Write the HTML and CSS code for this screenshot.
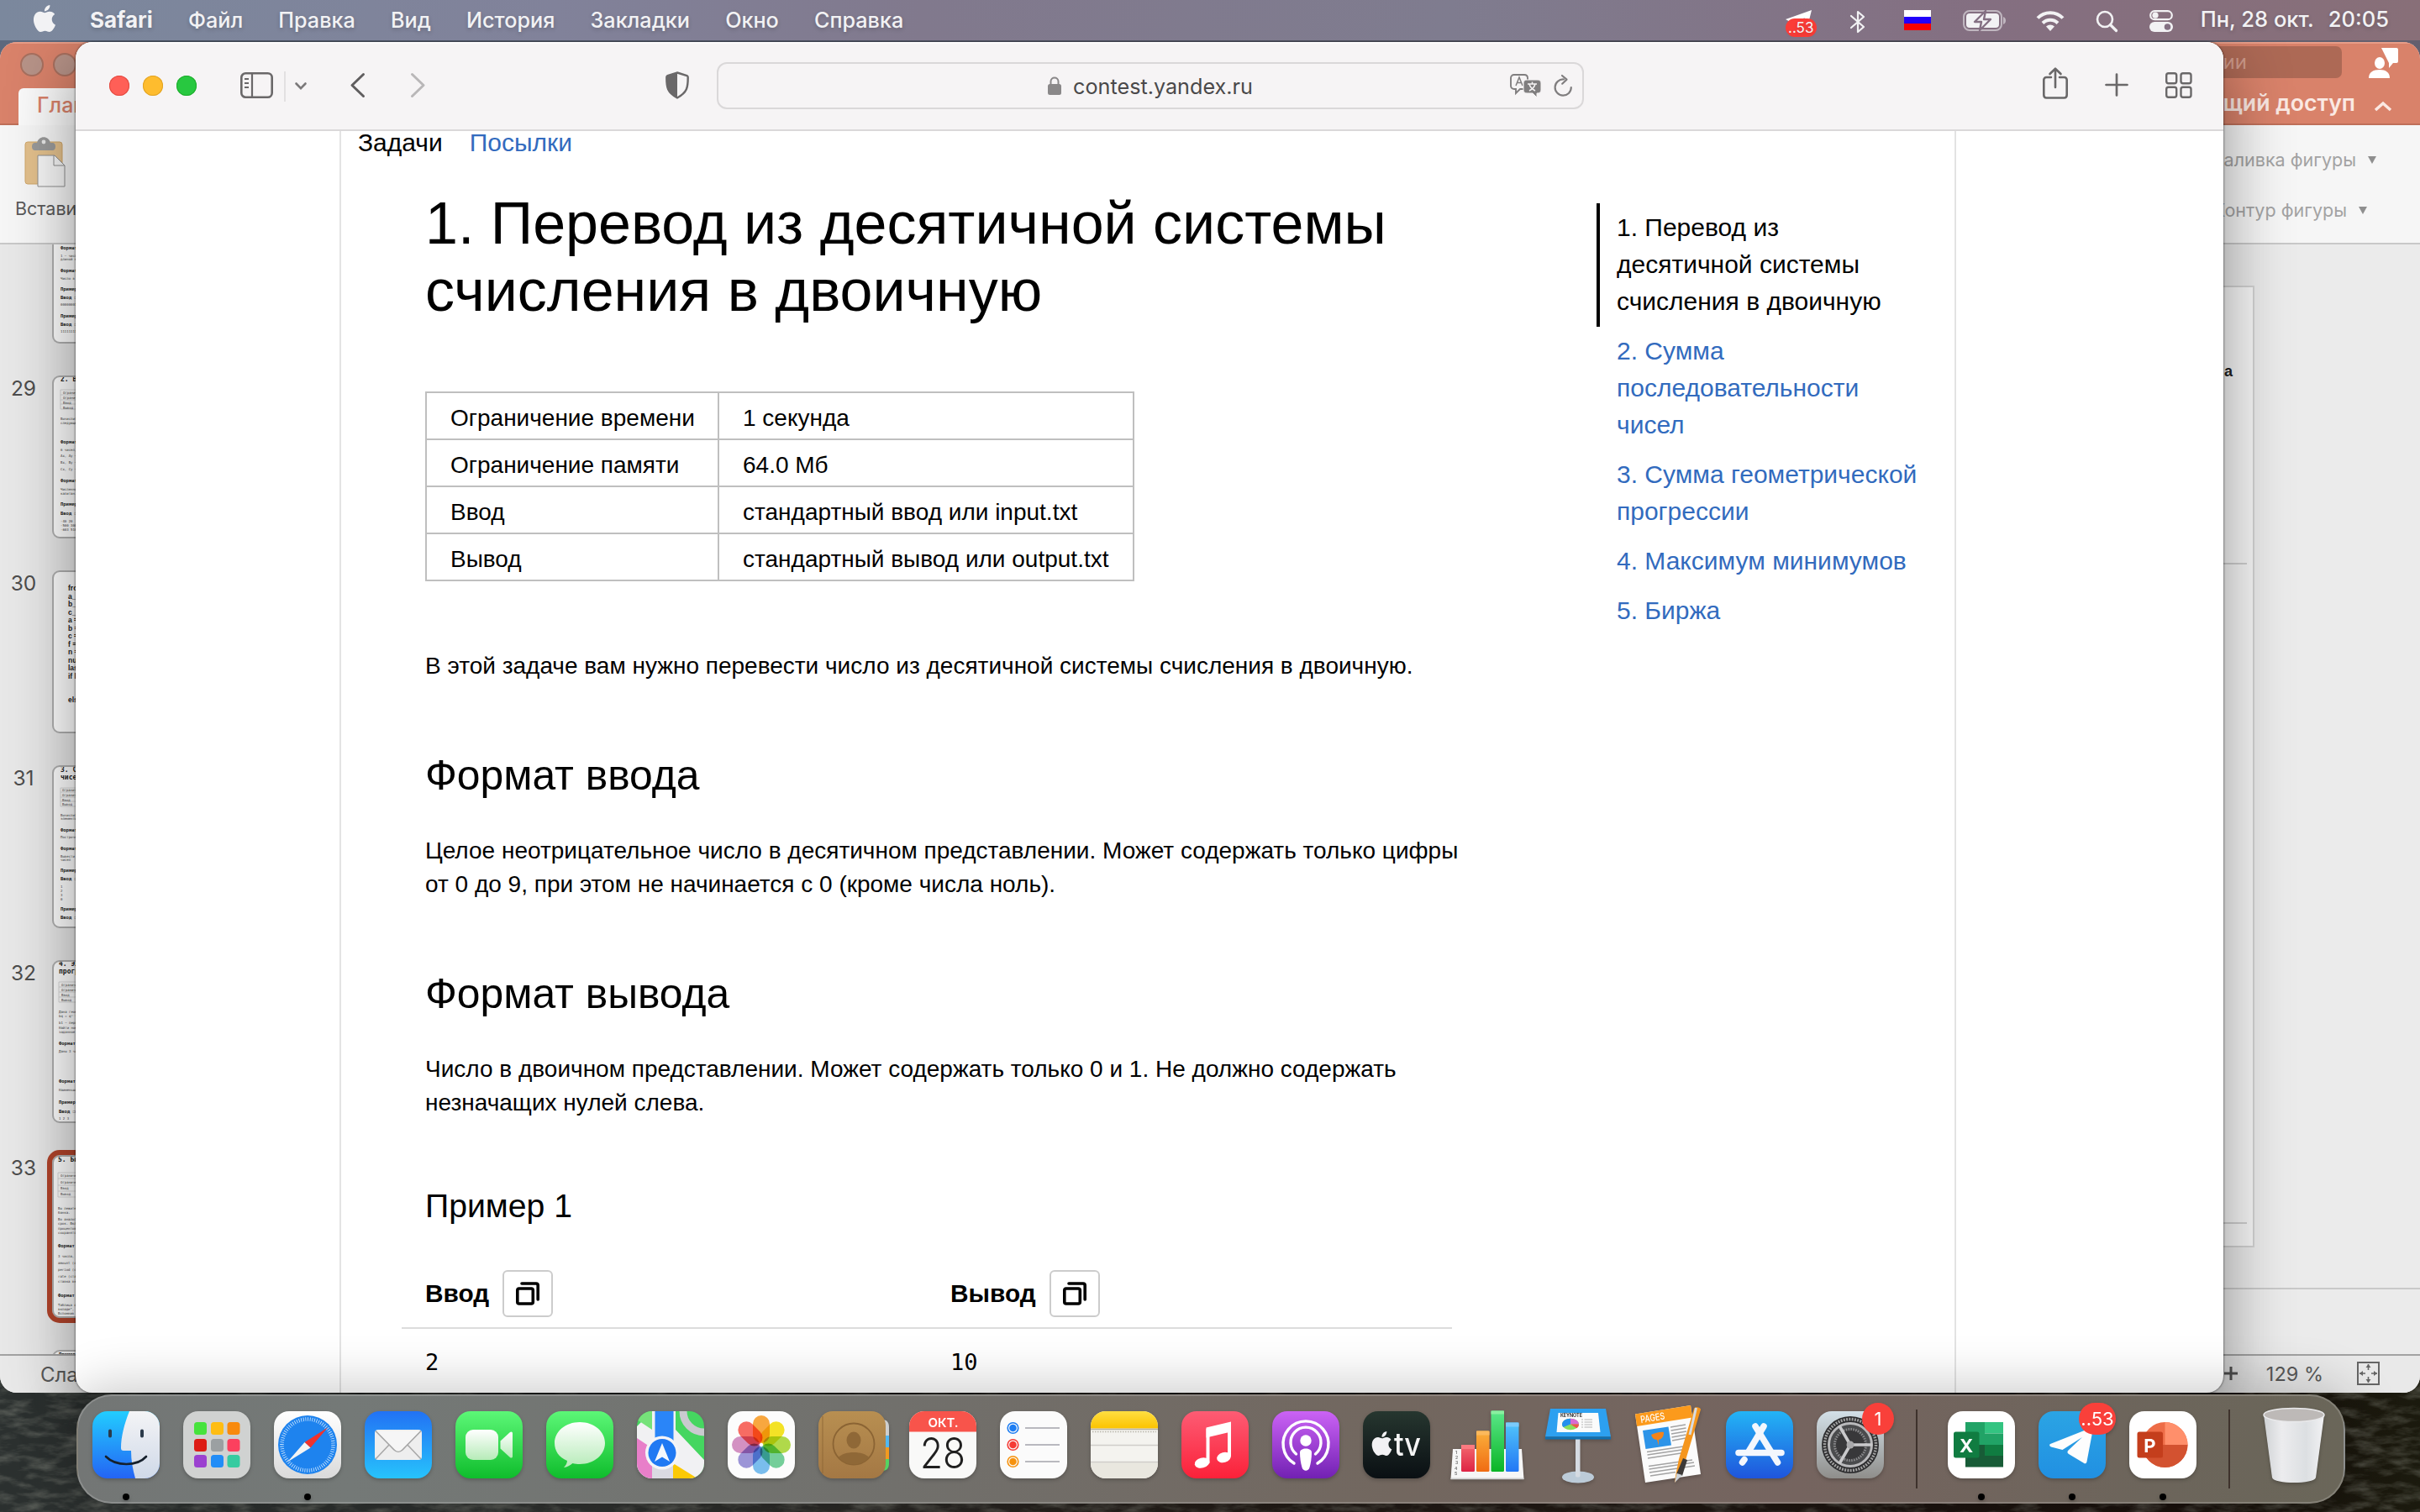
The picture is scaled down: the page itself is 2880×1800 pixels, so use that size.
FILE: index.html
```html
<!DOCTYPE html>
<html lang="ru">
<head>
<meta charset="utf-8">
<title>contest.yandex.ru</title>
<link rel="stylesheet" href="styles.css">
</head>
<body>
<div class="desktop">
  <svg class="wallpaper" width="2880" height="200" viewBox="0 0 2880 200">
    <defs>
      <linearGradient id="wall"><stop offset="0" stop-color="#2b302f"/><stop offset=".25" stop-color="#2f312f"/><stop offset=".5" stop-color="#241d18"/><stop offset=".9" stop-color="#1a110c"/><stop offset="1" stop-color="#1b1a0e"/></linearGradient>
      <filter id="rock" x="0" y="0" width="100%" height="100%"><feTurbulence type="fractalNoise" baseFrequency=".03 .09" numOctaves="4" seed="7"/><feColorMatrix values="0 0 0 0 .33  0 0 0 0 .34  0 0 0 0 .29  1.8 0 0 0 -.75"/></filter>
    </defs>
    <rect width="2880" height="200" fill="url(#wall)"/>
    <rect width="2880" height="200" filter="url(#rock)" opacity=".5"/>
  </svg>

  <header class="menubar">
    <nav class="menus">
      <svg class="apple" width="32" height="32" viewBox="0 0 24 24"><path id="apple-mark" fill="#f2f2f4" d="M12.152 6.896c-.948 0-2.415-1.078-3.96-1.04-2.04.027-3.91 1.183-4.961 3.014-2.117 3.675-.546 9.103 1.519 12.09 1.013 1.454 2.208 3.09 3.792 3.039 1.52-.065 2.09-.987 3.935-.987 1.831 0 2.35.987 3.96.948 1.637-.026 2.676-1.48 3.676-2.948 1.156-1.688 1.636-3.325 1.662-3.415-.039-.013-3.182-1.221-3.22-4.857-.026-3.04 2.48-4.494 2.597-4.559-1.429-2.09-3.623-2.324-4.39-2.376-2-.156-3.675 1.09-4.61 1.09zM15.53 3.83c.843-1.012 1.4-2.427 1.245-3.83-1.207.052-2.662.805-3.532 1.818-.78.896-1.454 2.338-1.273 3.714 1.338.104 2.715-.688 3.559-1.701"/></svg>
      <b>Safari</b><span>Файл</span><span>Правка</span><span>Вид</span><span>История</span><span>Закладки</span><span>Окно</span><span>Справка</span>
    </nav>
    <div class="status">
      <div class="tg"><svg width="32" height="24" viewBox="0 0 32 24"><path d="M0 11 31 0 25 24 14 20 23 9 9 16z" fill="#fff"/></svg><i>..53</i></div>
      <svg class="bt" width="18" height="28" viewBox="0 0 18 28"><path d="M1 7 16 20 9 26V2l7 6L1 21" fill="none" stroke="#f2f2f4" stroke-width="2.2" stroke-linejoin="round" stroke-linecap="round"/></svg>
      <svg class="flag" width="32" height="24" viewBox="0 0 32 24"><path fill="#fff" d="M0 0h32v8H0z"/><path fill="#2200fb" d="M0 8h32v8H0z"/><path fill="#f80000" d="M0 16h32v8H0z"/></svg>
      <svg class="battery" width="52" height="25" viewBox="0 0 52 25"><rect x="1" y="1" width="45" height="23" rx="7" fill="none" stroke="#f2f2f4" stroke-opacity=".55" stroke-width="2"/><path d="M48 8c4 1 4 8 0 9z" fill="#f2f2f4" opacity=".55"/><rect x="4" y="4" width="39" height="17" rx="4" fill="#f2f2f4"/><path d="M27 1 14 14h8l-2 10 13-13h-8z" fill="#f2f2f4" stroke="#847083" stroke-width="2.4" stroke-linejoin="round"/></svg>
      <svg class="wifi" width="34" height="25" viewBox="0 0 34 25"><g fill="none" stroke="#f2f2f4" stroke-width="4"><path d="M2 9.500C10 1 24 1 32 9.500"/><path d="M8 15.500c5-5 13-5 18 0"/></g><path d="M17 25l-5-5.500c3-2.700 7-2.700 10 0z" fill="#f2f2f4"/></svg>
      <svg class="find" width="27" height="26" viewBox="0 0 27 26"><circle cx="11" cy="11" r="9" fill="none" stroke="#f2f2f4" stroke-width="2.600"/><path d="M17.500 17.500 24.500 24.500" stroke="#f2f2f4" stroke-width="3.200" stroke-linecap="round"/></svg>
      <svg class="control" width="28" height="26" viewBox="0 0 28 26"><rect x="1.200" y="1.200" width="25.600" height="10" rx="5" fill="none" stroke="#f2f2f4" stroke-width="2.200"/><circle cx="7" cy="6.200" r="3.600" fill="#f2f2f4"/><rect y="14" width="28" height="12" rx="6" fill="#f2f2f4"/><circle cx="21.500" cy="20" r="3.800" fill="#847083"/></svg>
      <time><span>Пн, 28 окт.</span><span>20:05</span></time>
    </div>
  </header>

  <section class="ppt">
    <div class="ppt-title">
      <div class="ppt-row">
        <i class="off"></i><i class="off"></i>
        <div class="ppt-search">Поиск в презентации</div>
        <svg width="36" height="38" viewBox="0 0 36 38"><path d="M15 0h18a2 2 0 0 1 2 2v14a2 2 0 0 1-2 2h-4l-5 6v-6z" fill="#fff"/><ellipse cx="13" cy="18" rx="7" ry="8" fill="#fff" stroke="#d9826a" stroke-width="2"/><path d="M0 36c0-7 5-10 13-10 7 0 12 3 12 10z" fill="#fff"/></svg>
      </div>
      <div class="ppt-tabs">
        <span class="tab">Главная</span>
        <span class="share">Общий доступ</span>
        <svg width="22" height="12" viewBox="0 0 22 12"><path d="M2 10 11 2l9 8" fill="none" stroke="#fbe9e3" stroke-width="3.500"/></svg>
      </div>
    </div>
    <div class="ribbon">
      <div class="paste">
        <svg width="50" height="60" viewBox="0 0 50 60"><rect x="0" y="6" width="44" height="50" rx="3" fill="#e3c08c" stroke="#cfa669"/><path d="M11 16c-4 0-4-9 0-9h3c2-9 14-9 16 0h3c4 0 4 9 0 9z" fill="#9a9a9a"/><circle cx="22" cy="6" r="2.400" fill="#e8e8e8"/><path d="M15 22h20l12 12v25H15z" fill="#f6f6f6" stroke="#8e8e8e"/><path d="M34 22v12h13" fill="none" stroke="#8e8e8e"/></svg>
        <span>Вставить</span>
      </div>
      <div class="shape-tools">
        <p>Заливка фигуры <svg width="10" height="9" viewBox="0 0 10 9"><path d="M0 0h10L5 9z" fill="#8f8f8f"/></svg></p>
        <p class="outline">Контур фигуры <svg width="10" height="9" viewBox="0 0 10 9"><path d="M0 0h10L5 9z" fill="#8f8f8f"/></svg></p>
      </div>
    </div>
    <div class="ppt-body">
      <div class="slides">
        <div class="slide cut"><b></b><svg width="300" height="118"><g class="h"><text x="8" y="6">Формат ввода</text><text x="8" y="33">Формат вывода</text><text x="8" y="55">Пример 1</text><text x="8" y="65">Ввод ❐</text><text x="8" y="87">Пример 2</text><text x="8" y="97">Ввод ❐</text></g><g class="t"><text x="8" y="15">1 — число в</text><text x="8" y="19">длиной не п</text><text x="8" y="42">Число в 10</text><text x="8" y="73">00000001</text><text x="8" y="105">11111111</text></g></svg></div>
        <div class="slide"><b>29</b><svg width="300" height="190"><text class="big" x="8" y="5">2. Вычисление</text><path class="grid" d="M8 15h90v23H8zM8 21h90M8 27h90M8 32h90"/><g class="h"><text x="8" y="79">Формат ввода</text><text x="8" y="125">Формат вывода</text><text x="8" y="153">Пример 1</text><text x="8" y="164">Ввод ❐</text></g><g class="t"><text x="11" y="20">Ограничение</text><text x="11" y="26">Ограничение</text><text x="11" y="32">Ввод</text><text x="11" y="38">Вывод</text><text x="8" y="51">Вычислить п</text><text x="8" y="56">следующего</text><text x="8" y="88">6 чисел, ка</text><text x="8" y="95">Ax, Ay — ч</text><text x="8" y="103">Bx, By — ч</text><text x="8" y="111">Cx, Cy — ч</text><text x="8" y="135">Численное з</text><text x="8" y="140">капитан.</text><text x="8" y="173">-40 20</text><text x="8" y="178">-500 300</text><text x="8" y="183">-603 510</text></g></svg></div>
        <div class="slide"><b>30</b><svg width="300" height="190"><g class="code"><text x="17" y="22">from math</text><text x="17" y="31.500">a_in = 1</text><text x="17" y="41">b_in = 1</text><text x="17" y="50.500">c_in = 1</text><text x="17" y="60">a = int</text><text x="17" y="69.500">b = int</text><text x="17" y="79">c = int</text><text x="17" y="88.500">f = int</text><text x="17" y="98">n = int</text><text x="17" y="107.500">num = 0</text><text x="17" y="117">last = 0</text><text x="17" y="126.500">if last:</text><text x="17" y="155">else:</text></g></svg></div>
        <div class="slide"><b>31</b><svg width="300" height="190"><text class="big" x="8" y="6">3. Сумма</text><text class="big" x="8" y="15">чисел</text><path class="grid" d="M8 25h90v22H8zM8 30h90M8 36h90M8 41h90"/><g class="h"><text x="8" y="77">Формат ввода</text><text x="8" y="99">Формат вывода</text><text x="8" y="125">Пример 1</text><text x="8" y="135">Ввод ❐</text><text x="8" y="171">Пример 2</text><text x="8" y="181">Ввод ❐</text></g><g class="t"><text x="10" y="29">Ограничение</text><text x="10" y="35">Ограничение</text><text x="10" y="41">Ввод</text><text x="10" y="46">Вывод</text><text x="8" y="59">Вычислить с</text><text x="8" y="63">элементов</text><text x="8" y="85">Построчно в</text><text x="8" y="108">Вывести 2 ч</text><text x="8" y="112">чисел</text><text x="8" y="144">1</text><text x="8" y="149">2</text><text x="8" y="154">3</text><text x="8" y="159">0</text></g></svg></div>
        <div class="slide"><b>32</b><svg width="300" height="190"><text class="big" x="6" y="5">4. Элемент</text><text class="big" x="6" y="14">прогрессии</text><path class="grid" d="M6 24h90v24H6zM6 30h90M6 36h90M6 42h90"/><g class="h"><text x="6" y="99">Формат ввода</text><text x="6" y="144">Формат вывода</text><text x="6" y="169">Пример 1</text><text x="6" y="180">Ввод ❐</text></g><g class="t"><text x="9" y="29">Ограничение</text><text x="9" y="35">Ограничение</text><text x="9" y="41">Ввод</text><text x="9" y="47">Вывод</text><text x="6" y="61">Дана геомет</text><text x="6" y="66">bq = qⁿ⁺²,</text><text x="6" y="74">b1 — первый</text><text x="6" y="80">Найти номер</text><text x="6" y="85">заданное по</text><text x="6" y="108">Даны 3 числ</text><text x="6" y="154">Наименьший</text><text x="6" y="188">1 2 3</text></g></svg></div>
        <div class="slide current"><b>33</b><svg width="300" height="190"><text class="big" x="5" y="6">5. Биржа</text><path class="grid" d="M5 19h90v29H5zM5 26h90M5 34h90M5 41h90"/><g class="h"><text x="5" y="108">Формат ввода</text><text x="5" y="167">Формат вывода</text></g><g class="t"><text x="8" y="24">Ограничение</text><text x="8" y="32">Ограничение</text><text x="8" y="39">Ввод</text><text x="8" y="46">Вывод</text><text x="5" y="63">Вы лежите на</text><text x="5" y="68">банка.</text><text x="5" y="76">Во аналогич</text><text x="5" y="81">срок. Вклад</text><text x="5" y="87">процентов п</text><text x="5" y="92">сохранятся</text><text x="5" y="120">3 числа, ка</text><text x="5" y="128">amount (су</text><text x="5" y="136">period (ср</text><text x="5" y="144">rate (став</text><text x="5" y="150">ставка вкл</text><text x="5" y="178">Таблица со</text><text x="5" y="183">вкладе", "</text><text x="5" y="188">Вспомнив</text></g></svg></div>
        <div class="slide"><b></b><svg width="300" height="190"><g class="h"><text x="6" y="5">Пример 1</text></g></svg></div>
      </div>
      <div class="stage">
        <div class="canvas"><div class="sheet"><span>а</span><hr><hr class="low"></div></div>
        <div class="notes"></div>
      </div>
    </div>
    <footer class="ppt-status">
      <span>Слайд 33 из 34</span>
      <div class="zoom"><svg width="18" height="18" viewBox="0 0 18 18"><path d="M9 1v16M1 9h16" stroke="#555" stroke-width="3"/></svg><span>129 %</span>
      <svg width="27" height="28" viewBox="0 0 27 28"><rect x="1" y="1" width="25" height="26" fill="none" stroke="#666" stroke-width="2"/><path d="M13.500 3v7M13.500 18v7M3 14h7M17 14h7" stroke="#666" stroke-width="1.600"/><path d="M10.500 7 13.500 3l3 4zM10.500 21l3 4 3-4zM7 11l-4 3 4 3zM20 11l4 3-4 3z" fill="#666"/></svg></div>
    </footer>
  </section>

  <section class="safari">
    <div class="toolbar">
      <div class="lights"><i class="red"></i><i class="yellow"></i><i class="green"></i></div>
      <svg class="side" width="39" height="31" viewBox="0 0 39 31"><rect x="1.300" y="1.300" width="36.400" height="28.400" rx="5" fill="none" stroke="#6a6869" stroke-width="2.600"/><path d="M14 1v29" stroke="#6a6869" stroke-width="2.200"/><path d="M5 8h5M5 13h5M5 18h5" stroke="#6a6869" stroke-width="1.800"/></svg>
      <i class="rule"></i>
      <svg class="caret" width="14" height="9" viewBox="0 0 14 9"><path d="M1.500 1.500 7 7.200l5.500-5.700" fill="none" stroke="#7b797a" stroke-width="2.600" stroke-linecap="round"/></svg>
      <svg class="back" width="17" height="29" viewBox="0 0 17 29"><path d="M15.500 1.500 2 14.500l13.500 13" fill="none" stroke="#605e5f" stroke-width="3" stroke-linecap="round" stroke-linejoin="round"/></svg>
      <svg class="fwd" width="17" height="29" viewBox="0 0 17 29"><path d="M1.500 1.500 15 14.500l-13.500 13" fill="none" stroke="#b9b7b8" stroke-width="3" stroke-linecap="round" stroke-linejoin="round"/></svg>
      <svg class="shield" width="28" height="33" viewBox="0 0 28 33"><path d="M14 1.500 25.500 5c1 .5 1.200 1 1.200 2 0 12-.7 18-12.700 24.500C2 25 1.300 19 1.300 7c0-1 .2-1.500 1.200-2z" fill="none" stroke="#6a6869" stroke-width="2.400"/><path d="M14 1.500V31.500C2 25 1.300 19 1.300 7c0-1 .2-1.500 1.200-2z" fill="#6a6869"/></svg>
      <div class="url">
        <div class="address">
          <svg width="16" height="23" viewBox="0 0 16 23"><rect y="9" width="16" height="13" rx="2.500" fill="#8a8889"/><path d="M3.500 10V6c0-6 9-6 9 0v4" fill="none" stroke="#8a8889" stroke-width="2"/></svg>
          <span>contest.yandex.ru</span>
        </div>
        <div class="url-tools">
          <svg width="38" height="28" viewBox="0 0 38 28"><path d="M5 1h12c2.500 0 4 1.500 4 4v9c0 2.500-1.500 4-4 4h-5l-5 5v-5H5c-2.500 0-4-1.500-4-4V5c0-2.500 1.500-4 4-4z" fill="none" stroke="#807e7f" stroke-width="1.900"/><path d="M7 14 11 4l4 10M8.500 10.500h5" fill="none" stroke="#807e7f" stroke-width="1.500"/><path d="M20 7h13c2.500 0 4 1.500 4 4v8c0 2.500-1.500 4-4 4h-1v5l-5-5h-7c-2.500 0-4-1.500-4-4v-8c0-2.500 1.500-4 4-4z" fill="#807e7f" stroke="#f6f4f5"/><path d="M21 12h11M26.500 9.500V12M23 20c4-2 6-4 7-8M30 20c-4-2-6-4-7-8" fill="none" stroke="#f6f4f5" stroke-width="1.500"/></svg>
          <svg width="23" height="27" viewBox="0 0 23 27"><path d="M12 5.500A9.600 9.600 0 1 0 20.800 15" fill="none" stroke="#807e7f" stroke-width="2.200" stroke-linecap="round"/><path d="M10 1l5.500 4.700-5.300 5" fill="none" stroke="#807e7f" stroke-width="2.200" stroke-linecap="round" stroke-linejoin="round"/></svg>
        </div>
      </div>
      <svg class="shr" width="30" height="38" viewBox="0 0 30 38"><path d="M10 12H4.500C2.500 12 1.300 13.200 1.300 15v18c0 2 1.200 3.500 3.200 3.500h21c2 0 3.200-1.500 3.200-3.500V15c0-1.800-1.200-3-3.200-3H20M15 24V2M8.500 8 15 1.700 21.500 8" fill="none" stroke="#6a6869" stroke-width="2.600" stroke-linecap="round" stroke-linejoin="round"/></svg>
      <svg class="plus" width="28" height="28" viewBox="0 0 28 28"><path d="M14 1.500v25M1.500 14h25" stroke="#6a6869" stroke-width="2.700" stroke-linecap="round"/></svg>
      <svg class="tiles" width="32" height="31" viewBox="0 0 32 31"><g fill="none" stroke="#6a6869" stroke-width="2.400"><rect x="1.200" y="1.200" width="12" height="12" rx="2.500"/><rect x="18.500" y="1.200" width="12" height="12" rx="2.500"/><rect x="1.200" y="17.800" width="12" height="12" rx="2.500"/><rect x="18.500" y="17.800" width="12" height="12" rx="2.500"/></g></svg>
    </div>
    <main class="page">
      <nav class="tabs"><span>Задачи</span><a>Посылки</a></nav>
      <div class="columns">
        <article>
          <h1>1. Перевод из десятичной системы счисления в двоичную</h1>
          <table>
            <tr><td class="key">Ограничение времени</td><td>1 секунда</td></tr>
            <tr><td>Ограничение памяти</td><td>64.0 Мб</td></tr>
            <tr><td>Ввод</td><td>стандартный ввод или input.txt</td></tr>
            <tr><td>Вывод</td><td>стандартный вывод или output.txt</td></tr>
          </table>
          <p>В этой задаче вам нужно перевести число из десятичной системы счисления в двоичную.</p>
          <h2>Формат ввода</h2>
          <p>Целое неотрицательное число в десятичном представлении. Может содержать только цифры<br>от 0 до 9, при этом не начинается с 0 (кроме числа ноль).</p>
          <h2>Формат вывода</h2>
          <p>Число в двоичном представлении. Может содержать только 0 и 1. Не должно содержать<br>незначащих нулей слева.</p>
          <h3>Пример 1</h3>
          <div class="sample head">
            <div>Ввод <button><svg width="28" height="28" viewBox="0 0 28 28"><rect x="1.800" y="8" width="18.500" height="18" rx="2" fill="none" stroke="#000" stroke-width="3.600"/><path d="M7 2h17c1.500 0 2.200.7 2.200 2.200V21" fill="none" stroke="#000" stroke-width="3.600" stroke-linecap="round"/></svg></button></div>
            <div>Вывод <button><svg width="28" height="28" viewBox="0 0 28 28"><rect x="1.800" y="8" width="18.500" height="18" rx="2" fill="none" stroke="#000" stroke-width="3.600"/><path d="M7 2h17c1.500 0 2.200.7 2.200 2.200V21" fill="none" stroke="#000" stroke-width="3.600" stroke-linecap="round"/></svg></button></div>
          </div>
          <div class="sample data"><code>2</code><code>10</code></div>
        </article>
        <aside>
          <a class="active">1. Перевод из<br>десятичной системы<br>счисления в двоичную</a>
          <a>2. Сумма<br>последовательности<br>чисел</a>
          <a>3. Сумма геометрической<br>прогрессии</a>
          <a>4. Максимум минимумов</a>
          <a>5. Биржа</a>
        </aside>
      </div>
    </main>
  </section>

  <footer class="dock">
    <svg class="defs" width="0" height="0"><defs>
      <linearGradient id="gBlue" x2="0" y2="1"><stop stop-color="#22cdff"/><stop offset="1" stop-color="#2464f4"/></linearGradient>
      <linearGradient id="gFace" x2="0" y2="1"><stop stop-color="#f4f4f6"/><stop offset="1" stop-color="#cfd9e8"/></linearGradient>
      <linearGradient id="gWhite" x2="0" y2="1"><stop stop-color="#fff"/><stop offset="1" stop-color="#dadada"/></linearGradient>
      <linearGradient id="gMail" x2="0" y2="1"><stop stop-color="#2272f4"/><stop offset="1" stop-color="#27c3fc"/></linearGradient>
      <linearGradient id="gGreen" x2="0" y2="1"><stop stop-color="#5cf777"/><stop offset="1" stop-color="#0fbd2c"/></linearGradient>
      <linearGradient id="gGlyph" x2="0" y2="1"><stop stop-color="#fff"/><stop offset="1" stop-color="#b6ebb8"/></linearGradient>
      <linearGradient id="gMusic" x2="0" y2="1"><stop stop-color="#fd5c74"/><stop offset="1" stop-color="#fb2139"/></linearGradient>
      <linearGradient id="gPod" x2="0" y2="1"><stop stop-color="#cb63f5"/><stop offset="1" stop-color="#7221b3"/></linearGradient>
      <linearGradient id="gTv" x2="0" y2="1"><stop stop-color="#26362f"/><stop offset="1" stop-color="#0a0f13"/></linearGradient>
      <linearGradient id="gStore" x2="0" y2="1"><stop stop-color="#23b4f6"/><stop offset="1" stop-color="#1f55dc"/></linearGradient>
      <linearGradient id="gSet" x2="0" y2="1"><stop stop-color="#d3e0e8"/><stop offset="1" stop-color="#8f8e8b"/></linearGradient>
      <linearGradient id="gTg" x2="0" y2="1"><stop stop-color="#2ba4e4"/><stop offset="1" stop-color="#2190e2"/></linearGradient>
      <linearGradient id="gTan" x2="0" y2="1"><stop stop-color="#b88f51"/><stop offset="1" stop-color="#a47844"/></linearGradient>
      <linearGradient id="gNotes" x2="0" y2="1"><stop stop-color="#ffde42"/><stop offset="1" stop-color="#fbc300"/></linearGradient>
      <linearGradient id="gCan"><stop stop-color="#cfd2d5"/><stop offset=".3" stop-color="#ececee"/><stop offset=".7" stop-color="#dcdfe2"/><stop offset="1" stop-color="#f2f2f4"/></linearGradient>
      <linearGradient id="gBarRed" x2="0" y2="1"><stop stop-color="#f3696f"/><stop offset="1" stop-color="#de2344"/></linearGradient>
      <linearGradient id="gBarOrange" x2="0" y2="1"><stop stop-color="#fbb03c"/><stop offset="1" stop-color="#f06c12"/></linearGradient>
      <linearGradient id="gBarGreen" x2="0" y2="1"><stop stop-color="#5be88a"/><stop offset="1" stop-color="#0ab526"/></linearGradient>
      <linearGradient id="gBarBlue" x2="0" y2="1"><stop stop-color="#52c5fa"/><stop offset="1" stop-color="#2277f5"/></linearGradient>
      <clipPath id="tile"><rect width="80" height="80" rx="18"/></clipPath>
    </defs></svg>

    <div class="app running"><svg viewBox="0 0 80 80"><g clip-path="url(#tile)"><path fill="url(#gBlue)" d="M0 0h80v80H0z"/><path fill="url(#gFace)" d="M44 0C38 15 34 30 34 44c0 2 1 3 3 3h9c0 12 2 22 5 33h29V0z"/></g><path d="M21 23.500v6M59 23.500v6" stroke="#2b3a4a" stroke-width="4" stroke-linecap="round"/><path d="M16 54C28 66 53 66 64 54" fill="none" stroke="#15202c" stroke-width="2.600" stroke-linecap="round"/></svg></div>
    <div class="app"><svg viewBox="0 0 80 80"><rect width="80" height="80" rx="18" fill="#d0d2d1"/><rect x="13" y="13" width="15" height="15" rx="3.500" fill="#46e33c"/><rect x="33" y="13" width="15" height="15" rx="3.500" fill="#ffbd13"/><rect x="52.500" y="13" width="15" height="15" rx="3.500" fill="#f88a0d"/><rect x="13" y="33" width="15" height="15" rx="3.500" fill="#dd1c14"/><rect x="33" y="33" width="15" height="15" rx="3.500" fill="#9ba0a2"/><rect x="52.500" y="33" width="15" height="15" rx="3.500" fill="#fc405e"/><rect x="13" y="52" width="15" height="15" rx="3.500" fill="#9b41d0"/><rect x="33" y="52" width="15" height="15" rx="3.500" fill="#218df7"/><rect x="52.500" y="52" width="15" height="15" rx="3.500" fill="#35cba0"/></svg></div>
    <div class="app running"><svg viewBox="0 0 80 80"><rect width="80" height="80" rx="18" fill="url(#gWhite)"/><circle cx="40" cy="40" r="35" fill="#1e83ee"/><circle cx="40" cy="40" r="30.500" fill="none" stroke="#d8ecff" stroke-width="4.500" stroke-dasharray=".8 1.860"/><path d="M64 19.500 43.500 43.500 36.500 37z" fill="#f0322d"/><path d="M16 60.500 36.500 37l7 6.500z" fill="#f4f4f4"/></svg></div>
    <div class="app"><svg viewBox="0 0 80 80"><rect width="80" height="80" rx="18" fill="url(#gMail)"/><rect x="12" y="22" width="56" height="36" rx="4" fill="#eeeeee"/><path d="M13 57 30 39M67 57 50 39" stroke="#a9a9a9" stroke-width="1.600"/><path d="M13 23.500 35 46c3 3 7 3 10 0l22-22.500" fill="#f6f6f6" stroke="#a5a5a5" stroke-width="1.600"/></svg></div>
    <div class="app"><svg viewBox="0 0 80 80"><rect width="80" height="80" rx="18" fill="url(#gGreen)"/><rect x="12" y="22" width="39" height="36" rx="9" fill="url(#gGlyph)"/><path d="M53.500 35.500 65 25c1.500-1.200 3-.5 3 1.500v27c0 2-1.500 2.700-3 1.500L53.500 44.500z" fill="url(#gGlyph)"/></svg></div>
    <div class="app"><svg viewBox="0 0 80 80"><rect width="80" height="80" rx="18" fill="url(#gGreen)"/><path d="M40 13c17 0 30 11 30 25S57 63 40 63c-3 0-6-.3-8.500-1-3 2.700-6.500 4.500-10.500 5 2.500-2.500 3.700-5 4-8C15 55 10 47 10 38c0-14 13-25 30-25z" fill="url(#gGlyph)"/></svg></div>
    <div class="app"><svg viewBox="0 0 80 80"><g clip-path="url(#tile)"><path fill="#45d660" d="M0 0h80v80H0z"/><path fill="#f1f1f3" d="M0 18 18 0h28v22l34 36v22H0z"/><path fill="#76e27a" d="M0 0h18v22L0 10z"/><path fill="#e87fc9" d="M0 32 18 44v36H0z"/><path fill="#dadae2" d="M18 60h26v20H18z"/><path fill="#fbc905" d="M43 62 72 80H43z"/><path fill="#2a85f8" d="M21.500 0h22v36h-22z"/><circle cx="80" cy="0" r="25" fill="none" stroke="#c9cacf" stroke-width="9"/></g><circle cx="30" cy="49.500" r="20" fill="#f4f4f7"/><circle cx="30" cy="49.500" r="16.500" fill="#2079f3"/><path d="M30 38 39 60 30 54.500 21 60z" fill="#f5f8fc"/></svg></div>
    <div class="app"><svg viewBox="0 0 80 80"><rect width="80" height="80" rx="18" fill="#fcfcfc"/><g class="petals"><rect x="30" y="5" width="20" height="33" rx="10" fill="#fb9a1e"/><rect x="30" y="5" width="20" height="33" rx="10" fill="#f5e100" transform="rotate(45 40 40)"/><rect x="30" y="5" width="20" height="33" rx="10" fill="#a5d62b" transform="rotate(90 40 40)"/><rect x="30" y="5" width="20" height="33" rx="10" fill="#5dc98a" transform="rotate(135 40 40)"/><rect x="30" y="5" width="20" height="33" rx="10" fill="#64b5ee" transform="rotate(180 40 40)"/><rect x="30" y="5" width="20" height="33" rx="10" fill="#8d85d4" transform="rotate(225 40 40)"/><rect x="30" y="5" width="20" height="33" rx="10" fill="#cf80bb" transform="rotate(270 40 40)"/><rect x="30" y="5" width="20" height="33" rx="10" fill="#fa5348" transform="rotate(315 40 40)"/></g></svg></div>
    <div class="app"><svg viewBox="0 0 80 80"><path d="M76 10c6 0 8 4 8 9v10h-8z" fill="#cfcfcf"/><path d="M76 29h8v14h-8z" fill="#51b8f3"/><path d="M76 43h8v14h-8z" fill="#f39a1f"/><path d="M76 57h8v5c0 5-2 9-8 9z" fill="#54d562"/><rect y="0" width="80" height="80" rx="17" fill="url(#gTan)"/><path d="M5 6v68" stroke="#8e6736" stroke-width="1.500" opacity=".6"/><circle cx="42" cy="39" r="24.500" fill="none" stroke="#8b6434" stroke-width="1.800"/><ellipse cx="42" cy="34.500" rx="8.500" ry="10" fill="#8f6837"/><path d="M24 55c6-8 30-8 36 0-9 11-27 11-36 0z" fill="#8f6837"/></svg></div>
    <div class="app"><svg viewBox="0 0 80 80"><g clip-path="url(#tile)"><path fill="#f9f9f8" d="M0 0h80v80H0z"/><path fill="#f8544b" d="M0 0h80v24.500H0z"/></g><text x="40.500" y="18.500" text-anchor="middle" font-size="15" font-weight="600" fill="#fff" textLength="36">ОКТ.</text><text x="13" y="68" font-size="50" font-weight="300" fill="#1f1f1f" textLength="54" lengthAdjust="spacingAndGlyphs">28</text></svg></div>
    <div class="app"><svg viewBox="0 0 80 80"><rect width="80" height="80" rx="18" fill="#fbfbfb"/><path d="M30 20h41M30 40h41M30 60h41" stroke="#b9b9bf" stroke-width="1.800"/><g stroke-width="1.600"><circle cx="15.500" cy="20" r="6.300" fill="none" stroke="#1d7df2"/><circle cx="15.500" cy="20" r="4.300" fill="#1d7df2"/><circle cx="15.500" cy="40" r="6.300" fill="none" stroke="#f53a35"/><circle cx="15.500" cy="40" r="4.300" fill="#f53a35"/><circle cx="15.500" cy="60" r="6.300" fill="none" stroke="#f6920e"/><circle cx="15.500" cy="60" r="4.300" fill="#f6920e"/></g></svg></div>
    <div class="app"><svg viewBox="0 0 80 80"><g clip-path="url(#tile)"><path fill="#f4f3ef" d="M0 0h80v80H0z"/><path fill="#e9e7df" d="M0 60h80v20H0z"/><path fill="url(#gNotes)" d="M0 0h80v20.500H0z"/></g><path d="M0 21.500h80" stroke="#b5b1a4" stroke-width="1.500"/><path d="M2 24.500h76" stroke="#b9b6ab" stroke-width="1.500" stroke-dasharray="1.500 1.500"/><path d="M0 40.500h80M0 60.500h80" stroke="#cfcdc9" stroke-width="1.400"/></svg></div>
    <div class="app"><svg viewBox="0 0 80 80"><rect width="80" height="80" rx="18" fill="url(#gMusic)"/><path d="M31.500 62V22.500L57 16v38" fill="none" stroke="#fff" stroke-width="4"/><path d="M29.500 19.500 59 12.500v12l-29.500 7z" fill="#fff"/><ellipse cx="24.500" cy="61.500" rx="9" ry="6" transform="rotate(-15 24.500 61.500)" fill="#fff"/><ellipse cx="50.500" cy="55" rx="8.500" ry="6" transform="rotate(-15 50.500 55)" fill="#fff"/></svg></div>
    <div class="app"><svg viewBox="0 0 80 80"><rect width="80" height="80" rx="18" fill="url(#gPod)"/><g fill="none" stroke="#fff" stroke-width="3.400" stroke-linecap="round"><path d="M26 62A27 27 0 1 1 54 62"/><path d="M28.500 51A18 18 0 1 1 51.500 51"/></g><circle cx="40" cy="35" r="6.700" fill="#fff"/><path d="M33 49c0-6 14-6 14 0 0 6-1 13-2.500 18-1.500 5-7.500 5-9 0C34 62 33 55 33 49z" fill="#fff"/></svg></div>
    <div class="app"><svg viewBox="0 0 80 80"><rect width="80" height="80" rx="18" fill="url(#gTv)"/><use href="#apple-mark" transform="translate(8 24) scale(1.210)"/><text x="37" y="53" font-size="38" font-weight="500" fill="#f5f5f5" textLength="32" lengthAdjust="spacingAndGlyphs">tv</text></svg></div>
    <div class="app"><svg viewBox="0 0 80 80"><path d="M-1 45h82l2.500 36h-87z" fill="#f6f6f6"/><path d="M-3.400 79.500h86.800v1.800h-86.800z" fill="#cfcfcf"/><g font-size="5" font-weight="700" fill="#777"><text x="2" y="51">1</text><text x="2" y="57">2</text><text x="2" y="63">3</text><text x="1" y="69.500">4</text><text x="1" y="76">5</text></g><rect x="9" y="40" width="16" height="32" rx="1.500" fill="url(#gBarRed)"/><rect x="9" y="40" width="16" height="5" fill="#fa7a80"/><rect x="27" y="23.500" width="15.500" height="48.500" rx="1.500" fill="url(#gBarOrange)"/><rect x="27" y="23.500" width="15.500" height="5" fill="#fcb95c"/><rect x="44.500" y="-.5" width="15.500" height="72.500" rx="1.500" fill="url(#gBarGreen)"/><rect x="44.500" y="-.5" width="15.500" height="4" fill="#8af0a0"/><rect x="62" y="13.500" width="15.500" height="58.500" rx="1.500" fill="url(#gBarBlue)"/><rect x="62" y="13.500" width="15.500" height="5" fill="#7bcbfb"/></svg></div>
    <div class="app"><svg viewBox="0 0 80 80"><ellipse cx="40" cy="78.500" rx="19" ry="7" fill="#bccbd8"/><path d="M37 33h5.500v44c0 2-5.500 2-5.500 0z" fill="#d5dbe2"/><path d="M7 -3h66l6 33.500H1z" fill="#2da0f0"/><path d="M1 30.500h78v3H1z" fill="#0f6fb0"/><path d="M16.500 2h47.500l2.500 23h-52z" fill="#fbfbfb"/><text x="19" y="6.500" font-size="5.500" font-weight="700" fill="#333" textLength="26">KEYNOTE</text><ellipse cx="31" cy="15.500" rx="10" ry="6.800" fill="#8ade5d"/><path d="M31 15.500V8.700c-6 0-10 3-10 6.800 0 1.500.5 2.500 1.500 3.500z" fill="#2590ee"/><path d="M31 15.500V8.700c6 0 10 3 10 6.800z" fill="#d969d4"/><path d="M31 15.500h10c0 2-1 3.500-2.500 4.700z" fill="#f0524c"/><path d="M44 10h13M44 13h13M44 16h13M44 19h13" stroke="#b5b5b5" stroke-width="1" stroke-dasharray="2 1.500 12"/></svg></div>
    <div class="app"><svg viewBox="0 0 80 80"><path d="M0 3.500 66-7 78 75 12 85z" fill="#fbfbfb"/><path d="M0 3.500 66-7l2 14.500L2 18z" fill="#fb9a1c"/><text x="7" y="14" font-size="11.500" font-weight="500" fill="#fff" transform="rotate(-9 7 14)" textLength="29" lengthAdjust="spacingAndGlyphs">PAGES</text><path d="M9 23 39.500 18.500l3.500 22L12.500 45z" fill="#2d94e8"/><path d="M19 28c5-2 11-4 15-3 0 5-2 8-6 9l0 7-2-7c-4 0-6-3-7-6z" fill="#f4831a"/><path d="M42 19l18-3M42.500 23l18-3M43 27l18-3M43.500 31l17-3M44 35l16-3M14 48.500 64 41M14.500 52 62 45M15 56 61 49M16 65.500 68 58M16.500 69 70 61M17 73 71 65M18 77l30-4.500" stroke="#a3a3a3" stroke-width="1.300"/><path d="M70-3c1-3 8-2 8 1L59.500 60l-8 19-4.500 6 1-8 4-20z" fill="#f5961d"/><path d="M57 56l5 2-6 19-7-2z" fill="#3d3a38"/><path d="M49.500 74l6.500 2-9 9z" fill="#cdd3d8"/><path d="M72.500-4 65 28" stroke="#d6dce2" stroke-width="3"/></svg></div>
    <div class="app"><svg viewBox="0 0 80 80"><rect width="80" height="80" rx="18" fill="url(#gStore)"/><g stroke="#f3f7fd" stroke-width="7.500" stroke-linecap="round"><path d="M45 18 27 48"/><path d="M35 18 61.500 61"/><path d="M15 49.500h51"/><path d="M22 57.500 19.500 61"/></g></svg></div>
    <div class="app"><svg viewBox="0 0 80 80"><rect width="80" height="80" rx="18" fill="url(#gSet)"/><circle cx="40" cy="40" r="34" fill="#2d2d2f"/><circle cx="40" cy="40" r="30.500" fill="none" stroke="#a2a2a2" stroke-width="3.500" stroke-dasharray="1.900 1.400"/><circle cx="40" cy="40" r="25.500" fill="#4a4b4d" stroke="#b9b9bb" stroke-width="3"/><circle cx="40" cy="40" r="18.500" fill="#38383a" stroke="#8a8a8c" stroke-width="3" stroke-dasharray="1.600 1.300"/><path d="M40 40h26M40 40 27 17.500M40 40 27 62.500" stroke="#c9c9cb" stroke-width="3.600"/><circle cx="40" cy="40" r="4.500" fill="#a9a9ab"/></svg><i class="badge">1</i></div>
    <i class="divider"></i>
    <div class="app running"><svg viewBox="0 0 80 80"><rect width="80" height="80" rx="18" fill="#fff"/><path fill="#21a366" d="M21 13h23v27H21z"/><path fill="#33c481" d="M44 13h22v13.500H44z"/><path fill="#21a366" d="M44 26.500h22V40H44z"/><path fill="#107c41" d="M44 40h22v13H44z"/><path fill="#185c37" d="M21 40h23v13h22v13.500H21z"/><rect x="7" y="24.500" width="30.500" height="31" rx="2.500" fill="#107c41"/><text x="22" y="48.500" text-anchor="middle" font-size="22" font-weight="700" fill="#fff">X</text></svg></div>
    <div class="app running"><svg viewBox="0 0 80 80"><rect width="80" height="80" rx="18" fill="url(#gTg)"/><path d="M14 39 62 20c2-.5 3 .5 2.500 3L57.500 60c-.5 2.500-2 3-4 1.500L36 51c-2-1.500-2-3-.5-4.500L52 31 28.500 46 15 42.500c-2-.8-2.500-2.500-1-3.500z" fill="#fdfdfd"/></svg><i class="badge wide">..53</i></div>
    <div class="app running"><svg viewBox="0 0 80 80"><rect width="80" height="80" rx="18" fill="#fff"/><circle cx="42.500" cy="40" r="27" fill="#ed6c47"/><path d="M42.500 40V13a27 27 0 0 1 27 27z" fill="#ff8f6b"/><path d="M15.500 40a27 27 0 0 0 54 0z" fill="#d35230"/><rect x="9.500" y="24.500" width="30.500" height="31" rx="2.500" fill="#c43e1c"/><text x="24.500" y="48.500" text-anchor="middle" font-size="22" font-weight="700" fill="#fff">P</text></svg></div>
    <i class="divider"></i>
    <div class="app trash"><svg viewBox="0 0 80 80"><path d="M4 4l10 75c2 8 50 8 52 0L76 4z" fill="url(#gCan)"/><ellipse cx="40" cy="4.500" rx="36" ry="8" fill="#bdb9b7" stroke="#e9e9eb" stroke-width="1.600"/></svg></div>
  </footer>
</div>
</body>
</html>
```
FILE: styles.css
```css
* { box-sizing: border-box; }
body { margin: 0; }
svg { display: block; flex: none; overflow: visible; }
i { font-style: normal; }

.desktop {
  position: relative;
  width: 2880px;
  height: 1800px;
  overflow: hidden;
  background: linear-gradient(90deg, #5c687d, #645f6e);
  font-family: Inter, "Liberation Sans", sans-serif;
}
.wallpaper { position: absolute; left: 0; bottom: 0; }

/* Menu bar */
.menubar {
  position: relative;
  z-index: 3;
  display: flex;
  justify-content: space-between;
  height: 48px;
  background: linear-gradient(90deg, #7b889d 0, #81829a 23%, #81798d 38%, #7f7c8f 60%, #846f81 82%, #886f78 100%);
  color: #f2f2f4;
  font-size: 25.200px;
  font-weight: 500;
  line-height: 46px;
}
.menus { display: flex; align-items: center; padding-left: 37px; }
.menus .apple { margin: -4px 38px 0 0; }
.menus b { font-size: 26px; font-weight: 700; width: 76px; margin-right: 41px; }
.menus span { margin-right: 42.200px; }
.menus b, .menus span, .status { text-shadow: 0 2px 5px rgba(0, 0, 0, .2); }
.status { display: flex; align-items: flex-start; padding: 12px 37px 0 0; }
.status .tg { position: relative; width: 37px; margin-right: 40px; }
.status .tg i {
  position: absolute;
  left: 0;
  top: 10px;
  width: 37px;
  height: 22px;
  border-radius: 11px;
  background: #fb3c37;
  font-size: 17px;
  font-weight: 400;
  line-height: 22px;
  text-align: center;
}
.bt { margin-right: 46px; }
.flag { margin-right: 38px; }
.battery { margin-right: 35px; }
.wifi { margin-right: 37px; }
.find { margin-right: 37px; }
.control { margin-right: 33px; }
.status time { display: flex; gap: 17px; margin-top: -12px; white-space: nowrap; font-size: 25.500px; }

/* PowerPoint window */
.ppt {
  position: absolute;
  left: 0;
  top: 50px;
  width: 2880px;
  height: 1608px;
  display: flex;
  flex-direction: column;
  overflow: hidden;
  border-radius: 20px;
  background: #ebebeb;
}
.ppt-title { height: 99px; background: #d9826a; border-top: 2px solid #e79d88; border-bottom: 2px solid #bf6f59; }
.ppt-row { display: flex; align-items: center; height: 54px; padding: 0 25px; }
.off { width: 28px; height: 28px; margin: -4px 12px 0 -1px; border-radius: 50%; background: #b79388; border: 2px solid #a8705f; }
.ppt-search {
  width: 500px;
  height: 38px;
  margin: -10px 32px 0 auto;
  padding-right: 113px;
  border-radius: 7px;
  background: #ad6955;
  color: #cf9b8c;
  font-size: 24px;
  line-height: 38px;
  text-align: right;
}
.ppt-row svg { margin-top: -6px; }
.ppt-tabs { display: flex; align-items: center; height: 43px; padding: 0 33px 0 22px; }
.tab { width: 180px; height: 45px; padding-left: 22px; border-radius: 6px 6px 0 0; background: #fafafa; color: #d9826a; font-size: 25px; font-weight: 500; line-height: 40px; }
.share { margin: -12px 22px 0 auto; color: #fbe9e3; font-size: 26.700px; font-weight: 600; }
.ppt-tabs svg { margin-top: -2px; }
.ribbon { display: flex; justify-content: space-between; height: 142px; background: #f6f6f6; border-bottom: 2px solid #c8c8c8; color: #a3a3a3; font-size: 21.500px; }
.paste { padding: 14px 0 0 18px; color: #5b5b5b; }
.paste svg { margin-left: 12px; }
.paste span { display: block; margin-top: 10px; line-height: 30px; }
.shape-tools { padding: 26px 52px 0 0; }
.shape-tools p { display: flex; align-items: center; justify-content: flex-end; gap: 14px; height: 30px; margin: 0 0 30px; }
.shape-tools .outline { padding-right: 11px; }
.ppt-body { display: flex; flex: 1; min-height: 0; }
.slides { display: flex; flex-direction: column; gap: 38px; width: 400px; overflow: hidden; background: #e8e8e8; border-right: 2px solid #c4c4c4; }
.slide { display: flex; flex: none; height: 194px; }
.slide b { width: 62px; padding-right: 6px; text-align: center; color: #4d4d4d; font-size: 24.500px; font-weight: 400; line-height: 30px; }
.slide svg { width: 304px; height: 194px; overflow: hidden; border: 2px solid #b0b0b0; border-radius: 9px; background: #fff; }
.slide.cut, .slide.cut svg { height: 118px; }
.slide.cut svg { border-top: 0; border-radius: 0 0 9px 9px; }
.slide.current svg { outline: 6px solid #b2442b; }
.slide text { font-family: "DejaVu Sans Mono", monospace; fill: #222; }
.slide .h text { font-size: 5.500px; font-weight: 700; }
.slide .t text { font-size: 4px; fill: #444; }
.slide .big { font-size: 8px; font-weight: 700; }
.slide .code text { font-family: "Liberation Sans", sans-serif; font-size: 8.500px; font-weight: 700; }
.slide .grid { fill: none; stroke: #ccc; stroke-width: .7; }
.stage { display: flex; flex: 1; flex-direction: column; }
.canvas { flex: 1; padding: 49px 197px 0 60px; }
.sheet { height: 1145px; border: 2px solid #d2d2d2; border-left: 0; background: #f8f8f8; padding: 85px 7px 0 0; text-align: right; color: #222; }
.sheet span { display: block; height: 30px; margin-right: 17px; font: 700 18px/30px "Liberation Sans", sans-serif; }
.sheet hr { height: 2px; margin: 213px 0 0; border: 0; background: #d0d0d0; }
.sheet .low { margin-top: 783px; }
.notes { height: 79px; border-top: 2px solid #c9c9c9; }
.ppt-status { display: flex; align-items: center; justify-content: space-between; height: 46px; padding: 0 48px; border-top: 2px solid #a3a3a3; background: #e9e9e9; color: #5a5a5a; font-size: 24px; }
.zoom { display: flex; align-items: center; margin-top: -2px; }
.zoom span { margin: 0 40px 0 33px; font-size: 23.500px; }

/* Safari window */
.safari {
  position: absolute;
  left: 90px;
  top: 50px;
  width: 2556px;
  height: 1608px;
  display: flex;
  flex-direction: column;
  overflow: hidden;
  border-radius: 20px;
  background: #fff;
  box-shadow: 0 0 2px 1px rgba(0, 0, 0, .35), 0 20px 80px rgba(0, 0, 0, .42);
}
.toolbar { flex: none; display: flex; align-items: center; height: 106px; padding-left: 40px; background: #f6f4f5; border-top: 2px solid #fdfcfc; border-bottom: 2px solid #dad8d9; }
.lights { display: flex; gap: 16px; margin: -2px 52px 0 0; }
.lights i { width: 24px; height: 24px; border-radius: 50%; }
.red { background: #ff5f57; box-shadow: inset 0 0 0 1px #e24b41; }
.yellow { background: #febc2e; box-shadow: inset 0 0 0 1px #e1a325; }
.green { background: #28c840; box-shadow: inset 0 0 0 1px #1eac2c; }
.side { margin-top: -4px; }
.rule { width: 2px; height: 36px; margin: 0 11px 0 13px; background: #e2e0e1; }
.back { margin-left: 52px; margin-top: -4px; }
.fwd { margin-left: 55px; margin-top: -4px; }
.caret { margin-top: -2px; }
.shield { margin: -3px 0 0 286px; }
.url { display: grid; grid-template-columns: 1fr auto 1fr; align-items: center; width: 1032px; height: 56px; margin: -2px 0 0 33px; border: 2px solid #dad8d9; border-radius: 12px; }
.address { grid-column: 2; display: flex; align-items: center; gap: 14px; color: #4a494a; font-size: 25.200px; }
.address span { padding-top: 2px; }
.url-tools { display: flex; align-items: center; justify-content: flex-end; gap: 14px; padding-right: 11px; }
.shr { margin: -8px 0 0 546px; }
.plus { margin: -4px 0 0 44px; }
.tiles { margin: -4px 0 0 44px; }

/* Contest page */
.page { flex: 1; width: 1924px; margin-left: 314px; border: solid #e3e3e3; border-width: 0 2px; overflow: hidden; font-family: "Liberation Sans", Arial, sans-serif; color: #000; }
.page a { color: #326bbe; }
.tabs { display: flex; gap: 32px; padding-left: 20px; font-size: 30px; line-height: 28px; }
.columns { display: flex; }
article { width: 1494px; padding: 42px 172px 0 100px; }
h1 { width: 1200px; margin: 0 0 80px; font-size: 70px; font-weight: 400; line-height: 80px; }
table { width: 844px; table-layout: fixed; border-collapse: collapse; font-size: 28px; }
td { height: 56px; padding: 5px 27px 0 28px; border: 2px solid #bfbfbf; line-height: 32px; white-space: nowrap; }
.key { width: 348px; }
article p { margin: 0; font-size: 28px; line-height: 40px; white-space: nowrap; }
h2 { margin: 80px 0 40px; font-size: 49.800px; font-weight: 400; line-height: 60px; }
table + p { margin-top: 81px; }
h3 { margin: 78px 0 51px; font-size: 39.200px; font-weight: 400; line-height: 50px; }
.sample { display: flex; width: 1250px; margin-left: -28px; }
.head { height: 70px; border-bottom: 2px solid #dcdcdc; font-size: 29.800px; font-weight: 700; }
.head div { display: flex; align-items: center; gap: 16px; width: 625px; height: 56px; padding-left: 28px; }
button { display: flex; align-items: center; justify-content: center; width: 60px; height: 56px; padding: 0; border: 2px solid #ccc; border-radius: 6px; background: #fff; }
.data { padding-top: 20px; }
.data code { width: 625px; padding-left: 28px; font: 27px/40px "DejaVu Sans Mono", monospace; }
aside { display: flex; flex-direction: column; padding-top: 58px; font-size: 30px; line-height: 44px; white-space: nowrap; }
aside a { padding: 7px 0 8px 20px; border-left: 4px solid transparent; }
aside .active { color: #000; border-color: #000; }

/* Dock */
.dock {
  position: absolute;
  z-index: 2;
  left: 91px;
  top: 1660px;
  width: 2700px;
  height: 130px;
  display: flex;
  gap: 28px;
  padding: 18px 0 0 17px;
  border: 2px solid rgba(255, 255, 255, .18);
  border-radius: 42px;
  background: linear-gradient(90deg, #737675 0, #747977 12%, #71706c 36%, #72675f 58%, #75645f 76%, #6c655b 92%, #6a6659 100%);
  box-shadow: 0 0 60px 12px rgba(0, 0, 0, .2);
  font-family: Inter, "Liberation Sans", sans-serif;
}
.defs { position: absolute; }
.app { position: relative; flex: none; width: 80px; height: 80px; filter: drop-shadow(0 2px 2px rgba(0, 0, 0, .22)); }
.app > svg { width: 80px; height: 80px; }
.petals rect { mix-blend-mode: multiply; opacity: .85; }
.running::after { content: ""; position: absolute; left: 36px; top: 98px; width: 8px; height: 8px; border-radius: 50%; background: #000; }
.divider { flex: none; width: 2px; height: 94px; margin: -2px 8px 0 10px; background: #3e322c; }
.badge { position: absolute; top: -10px; left: 54px; width: 38px; height: 38px; border-radius: 19px; background: #f9403a; color: #fff; font-size: 22px; line-height: 38px; text-align: center; }
.badge.wide { left: 48px; width: 44px; }
```
